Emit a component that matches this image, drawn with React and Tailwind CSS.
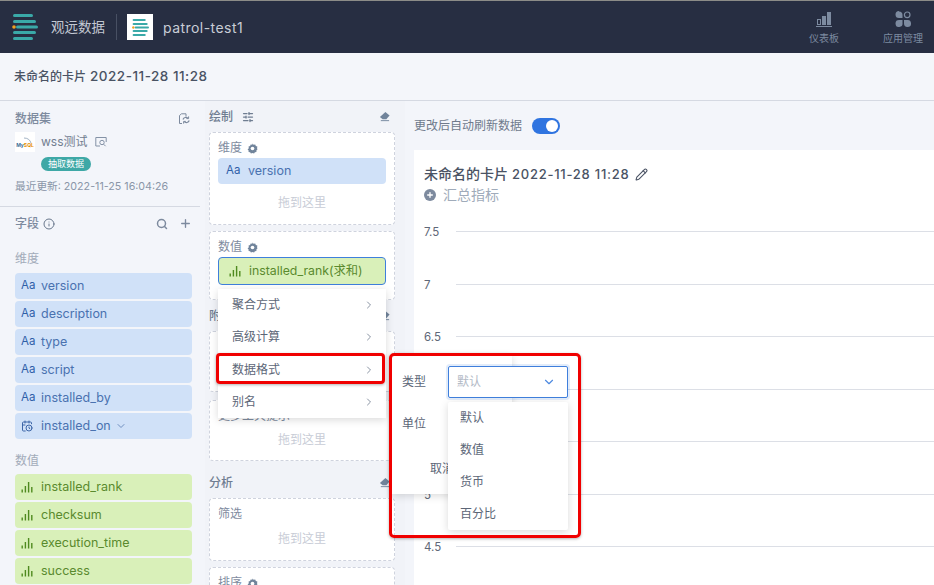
import { CalendarClock, ChevronDown, ChevronRight, Info, Pencil, Plus, Search, SlidersHorizontal } from "lucide-react";

const FONT = "font-['Inter','Noto_Sans_CJK_SC',sans-serif]";

const dimensions = ["version", "description", "type", "script", "installed_by"];
const measures = ["installed_rank", "checksum", "execution_time", "success"];
const menuItems = ["聚合方式", "高级计算", "数据格式", "别名"];
const typeOptions = ["默认", "数值", "货币", "百分比"];
const ticks = ["7.5", "7", "6.5", "6", "5.5", "5", "4.5"];

const LogoBars = ({ className }) => (
  <svg viewBox="0 0 26 26" className={className}>
    <rect x="1" y="0" width="20" height="3" rx="1.5" fill="#3aa9a8" />
    <rect x="1" y="6" width="23" height="3" rx="1.5" fill="#3aa9a8" />
    <rect x="4" y="11.5" width="22" height="3" rx="1.5" fill="#3aa9a8" />
    <rect x="1" y="17" width="23" height="3" rx="1.5" fill="#3aa9a8" />
    <rect x="1" y="23" width="20" height="3" rx="1.5" fill="#3aa9a8" />
    <circle cx="2" cy="13" r="1.8" fill="#f0a020" />
  </svg>
);

const BarsIcon = ({ className = "text-[#4f8a1f]" }) => (
  <svg viewBox="0 0 12 12" className={`w-3 h-3 ${className}`} fill="currentColor">
    <rect x="0.5" y="8.5" width="1.4" height="3" />
    <rect x="3.7" y="5" width="1.4" height="6.5" />
    <rect x="6.9" y="1" width="1.4" height="10.5" />
    <rect x="10.1" y="6" width="1.4" height="5.5" />
  </svg>
);

const Gear = () => (
  <svg viewBox="0 0 12 12" className="w-[11px] h-[11px] ml-[5px] text-[#71849b]">
    <path d="M6 .6l1.2 1.3 1.8-.3.6 1.7 1.7.6-.3 1.8L11.4 7l-1.2 1.1.1 1.6-1.7.3-.9 1.5L6 10.9l-1.7.6-.9-1.5-1.7-.3.1-1.6L.6 7l1.4-1.3-.3-1.8 1.7-.6.6-1.7 1.8.3z" fill="currentColor" />
    <circle cx="6" cy="6" r="2" fill="#fff" />
  </svg>
);

const Eraser = () => (
  <svg viewBox="0 0 12 12" className="w-[11px] h-[11px] ml-auto mr-[5px] text-[#71849b]">
    <path d="M7 1l4.5 4-3.5 4H4L1 6.5z" fill="currentColor" />
    <path d="M2 10.5h9" stroke="currentColor" strokeWidth="1" />
  </svg>
);

const SyncDoc = () => (
  <svg viewBox="0 0 12 12" className="w-3 h-3 text-[#7d8a9e]" fill="none" stroke="currentColor" strokeWidth="1">
    <path d="M4 10.5H1.5V2.5L3.5.8H8V3.5" />
    <path d="M5 6.5a3 3 0 015-1.2M11.2 7.5a3 3 0 01-5 1.2" strokeWidth="1.2" />
    <path d="M10.6 3.4v2.2H8.4M5.6 10.6V8.4h2.2" strokeWidth="1" />
  </svg>
);

const PreviewIcon = () => (
  <svg viewBox="0 0 12 12" className="w-3 h-3 ml-[7px] text-[#8492a6]" fill="none" stroke="currentColor" strokeWidth="1">
    <path d="M5 10H.8V1.5h10.4V6" />
    <circle cx="7" cy="6.5" r="2.2" />
    <path d="M8.6 8.2l2 2" />
  </svg>
);

const Aa = () => <span className="text-[11.5px] text-[#2f5fa8]">Aa</span>;

const Chip = ({ children, icon, tone = "blue" }) => (
  <div className={`h-[26px] rounded-sm flex items-center pl-[6px] text-[12.5px] ${tone === "blue" ? "bg-[#d0e1f8] text-[#4a72b0]" : "bg-[#d9f0b9] text-[#5a8a2e]"}`}>
    <span className="w-[20px] flex shrink-0">{icon}</span>
    {children}
  </div>
);

const DropZone = ({ title, gear, height, children }) => (
  <div className={`border border-dashed border-[#cfd3de] rounded-sm bg-white px-[8px] pt-[6px] ${height}`}>
    {title && (
      <div className="flex items-center text-[12px] leading-[18px] text-[#7f8ca0]">
        {title}
        {gear && <Gear />}
      </div>
    )}
    {children}
  </div>
);

const DropHint = ({ className = "" }) => (
  <div className={`text-center text-[12px] leading-[16px] text-[#c8ccd6] ${className}`}>拖到这里</div>
);

const SectionHead = ({ children, height }) => (
  <div className={`flex items-center text-[12px] font-medium text-[#6f7d91] ${height}`}>{children}</div>
);

export default function App() {
  return (
    <div className={`${FONT} relative w-[934px] h-[585px] overflow-hidden bg-[#f3f5fa] flex flex-col`}>
      {/* top bar */}
      <header className="h-[53px] shrink-0 bg-[#272e42] border-t border-[#8c8c88] flex items-center pl-[12px]">
        <LogoBars className="w-[26px] h-[26px]" />
        <span className="ml-[13px] text-[13.5px] text-[#c3c8d2]">观远数据</span>
        <div className="w-px h-[26px] bg-[#485063] ml-[11px]" />
        <div className="w-[26px] h-[26px] bg-white ml-[10px] flex items-center justify-center">
          <LogoBars className="w-[17px] h-[17px]" />
        </div>
        <span className="ml-[10px] text-[14px] tracking-[0.45px] text-[#c9cdd6]">patrol-test1</span>
        <div className="ml-auto flex">
          <div className="w-[40px] mr-[28px] flex flex-col items-center text-[#7d8ba0]">
            <svg viewBox="0 0 16 16" className="w-4 h-4" fill="currentColor">
              <path d="M1 8h4v6H1zM2 9v4h2V9zM6 5h4v9H6zM11 1h4v13h-4z" fillRule="evenodd" />
              <rect x="0" y="15" width="16" height="1" />
            </svg>
            <span className="text-[10px] mt-[5px] leading-[12px]">仪表板</span>
          </div>
          <div className="w-[62px] flex flex-col items-center text-[#7d8ba0]">
            <svg viewBox="0 0 16 16" className="w-4 h-4" fill="currentColor">
              <path d="M4 0.5a3.5 3.5 0 013.5 3.5v3H4a3.5 3.5 0 010-7zM4 9h3.5v3A3.5 3.5 0 114 9zM9 9h3a3.5 3.5 0 11-3 3.5z" />
              <circle cx="12.2" cy="3.8" r="2.8" fill="none" stroke="currentColor" strokeWidth="1.2" />
            </svg>
            <span className="text-[10px] mt-[5px] leading-[12px]">应用管理</span>
          </div>
        </div>
      </header>

      {/* card title bar */}
      <div className="h-[48px] shrink-0 bg-[#f4f6fa] border-b border-[#d5d9e2] flex items-center pl-[14px] text-[12px] font-medium text-[#4a5364]">
        未命名的卡片
        <span className="ml-[4px] text-[13.5px] tracking-[0.5px]">2022-11-28 11:28</span>
      </div>

      <div className="flex flex-1 min-h-0">
        {/* fields column */}
        <aside className="w-[205px] shrink-0 bg-[#f3f5fa]">
          <div className="w-[200px] h-[106px] border-b border-[#d5d9e2] pl-[15px] pr-[10px] pt-[9px]">
            <div className="flex items-center justify-between text-[12px] leading-[18px] font-medium text-[#7d8a9e]">
              数据集
              <SyncDoc />
            </div>
            <div className="flex items-center mt-[4px] h-[20px]">
              <div className="w-5 h-5 bg-white flex flex-col items-center justify-end pb-[4px] text-[5px] font-bold text-[#3f6f9a] leading-none">
                <svg viewBox="0 0 10 6" className="w-[10px] h-[6px] ml-[6px] text-[#8aa0b5]" fill="none" stroke="currentColor" strokeWidth="0.8">
                  <path d="M1 1c4 0 6 2 7 5" />
                </svg>
                <span>My<span className="text-[#e48e00]">SQL</span></span>
              </div>
              <span className="ml-[6px] text-[12px] text-[#717d90]">wss测试</span>
              <PreviewIcon />
            </div>
            <div className="ml-[26px] w-[50px] h-[14px] mt-[5px] rounded-full bg-[#3ea8a6] text-white text-[9px] flex items-center justify-center">抽取数据</div>
            <div className="mt-[8px] text-[10.7px] leading-[16px] text-[#8a96a8]">最近更新: 2022-11-25 16:04:26</div>
          </div>
          <div className="w-[200px] pl-[15px] pr-[8px]">
            <div className="flex items-center h-[33px] text-[12px] font-medium text-[#7d8a9e]">
              字段
              <Info className="w-3 h-3 ml-[4px] text-[#68778c]" />
              <Search className="w-3 h-3 ml-auto text-[#7d8a9e]" strokeWidth={3} />
              <Plus className="w-[13px] h-[13px] ml-[11px] text-[#7d8a9e]" strokeWidth={2.5} />
            </div>
            <div className="text-[12px] leading-[18px] text-[#a2abb9] mt-[10px] mb-[5px]">维度</div>
            <div className="flex flex-col gap-[2px]">
              {dimensions.map((name) => (
                <Chip key={name} icon={<Aa />}>{name}</Chip>
              ))}
              <Chip icon={<CalendarClock className="w-3 h-3 text-[#3d66a8]" />}>
                installed_on
                <ChevronDown className="w-3 h-3 ml-[4px] text-[#6f8fc0]" />
              </Chip>
            </div>
            <div className="text-[12px] leading-[18px] text-[#a2abb9] mt-[13px] mb-[4px]">数值</div>
            <div className="flex flex-col gap-[2px]">
              {measures.map((name) => (
                <Chip key={name} tone="green" icon={<BarsIcon />}>{name}</Chip>
              ))}
            </div>
          </div>
        </aside>

        {/* drawing column */}
        <section className="w-[200px] shrink-0 bg-[#f1f3f8] pl-[4px] pr-[10px]">
          <SectionHead height="h-[31px]">
            绘制
            <SlidersHorizontal className="w-3 h-3 ml-[9px] text-[#6f7d91]" strokeWidth={2.5} />
            <Eraser />
          </SectionHead>
          <div className="flex flex-col gap-[6px]">
            <DropZone title="维度" gear height="h-[93px]">
              <div className="mt-[1px] h-[26px] rounded-sm bg-[#d0e1f8] flex items-center pl-[8px] text-[12.5px] text-[#4a72b0]">
                <span className="w-[22px] flex"><Aa /></span>version
              </div>
              <DropHint className="mt-[11px]" />
            </DropZone>
            <DropZone title="数值" gear height="h-[69px]">
              <div className="mt-[1px] h-[28px] rounded-sm border border-[#3f7fdc] bg-[#d9f0b9] flex items-center pl-[10px] text-[12.3px] text-[#5a8a2e]">
                <span className="w-[20px] flex"><BarsIcon /></span>installed_rank(求和)
              </div>
            </DropZone>
          </div>
          <SectionHead height="h-[31px]">
            附加
            <Eraser />
          </SectionHead>
          <div className="flex flex-col gap-[8px]">
            <DropZone height="h-[61px]" />
            <DropZone title="更多工具提示" height="h-[61px]">
              <DropHint className="mt-[7px]" />
            </DropZone>
          </div>
          <SectionHead height="h-[37px] pt-[6px]">
            分析
            <Eraser />
          </SectionHead>
          <div className="flex flex-col gap-[6px]">
            <DropZone title="筛选" height="h-[63px]">
              <DropHint className="mt-[8px]" />
            </DropZone>
            <DropZone title="排序" gear height="h-[40px]" />
          </div>
        </section>

        {/* chart column */}
        <main className="flex-1 min-w-0 pl-[9px]">
          <div className="h-[49px] flex items-center">
            <span className="text-[12px] text-[#6f7a8c]">更改后自动刷新数据</span>
            <div className="ml-[10px] w-[28px] h-[16px] rounded-full bg-[#2f74e0] flex items-center justify-end pr-[2px]">
              <div className="w-3 h-3 rounded-full bg-white" />
            </div>
          </div>
          <div className="bg-white h-[440px] pl-[10px] pt-[15px]">
            <div className="flex items-center text-[14px] leading-[18px] font-medium text-[#4a5364]">
              未命名的卡片
              <span className="ml-[4px] text-[13px] tracking-[0.75px]">2022-11-28 11:28</span>
              <Pencil className="w-[13px] h-[13px] ml-[6px] text-[#4a5364]" />
            </div>
            <div className="flex items-center mt-[1px] text-[14px] text-[#a0abba]">
              <span className="w-3 h-3 rounded-full bg-[#7d8a9e] text-white flex items-center justify-center mr-[7px]">
                <Plus className="w-2 h-2" strokeWidth={4} />
              </span>
              汇总指标
            </div>
            <div className="mt-[18px] flex flex-col gap-[35px]">
              {ticks.map((tick) => (
                <div key={tick} className="h-[17.5px] flex items-center text-[11.5px] text-[#5f6878]">
                  <span className="w-[32px] pt-[2px]">{tick}</span>
                  <div className="flex-1 h-px bg-[#dcdfe6]" />
                </div>
              ))}
            </div>
          </div>
        </main>
      </div>

      {/* field context menu */}
      <div className="absolute left-[218px] top-[289px] w-[168px] h-[129px] bg-white shadow-[0_2px_8px_rgba(0,0,0,0.15)] flex flex-col justify-around">
        {menuItems.map((item) => (
          <div key={item} className="h-[32px] flex items-center justify-between pl-[14px] pr-[11px] text-[12px] text-[#5c6677]">
            {item}
            <ChevronRight className="w-3 h-3 text-[#8a94a3]" />
          </div>
        ))}
      </div>

      {/* format panel */}
      <div className="absolute left-[392px] top-[355px] w-[120px] h-[139px] bg-white shadow-[0_2px_8px_rgba(0,0,0,0.15)] text-[12px] text-[#5c6677]">
        <div className="flex h-[52px] items-center pl-[10px] pt-[2px]">类型</div>
        <div className="flex h-[32px] items-center pl-[10px] pt-[2px]">单位</div>
        <div className="pl-[38px] mt-[21px]">取消</div>
      </div>
      <div className="absolute left-[448px] top-[366px] w-[120px] h-[32px] bg-white border border-[#3f7fdc] rounded-[2px] shadow-[0_0_0_2px_rgba(63,127,220,0.15)] flex items-center justify-between pl-[8px] pr-[11px] text-[12px] text-[#b3bac6]">
        默认
        <ChevronDown className="w-[14px] h-[14px] text-[#4f8ae0]" />
      </div>
      <div className="absolute left-[448px] top-[402px] w-[120px] h-[128px] bg-white rounded-[2px] shadow-[0_2px_8px_rgba(0,0,0,0.15)] text-[12px] text-[#5c6677]">
        {typeOptions.map((option) => (
          <div key={option} className="h-[32px] flex items-center pl-[12px]">{option}</div>
        ))}
      </div>

      {/* red annotations */}
      <div className="absolute left-[216px] top-[353px] w-[169px] h-[31px] border-[3px] border-[#f00000] rounded-[4px] shadow-[0_1px_3px_rgba(0,0,0,0.3)]" />
      <div className="absolute left-[389px] top-[353px] w-[192px] h-[185px] border-[3px] border-[#f00000] rounded-[5px] shadow-[0_1px_3px_rgba(0,0,0,0.3)]" />
    </div>
  );
}
